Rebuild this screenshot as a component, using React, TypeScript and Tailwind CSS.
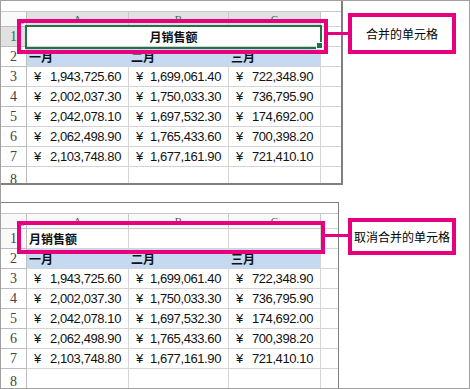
import React from "react";

const data = [
  ["1,943,725.60", "1,699,061.40", "722,348.90"],
  ["2,002,037.30", "1,750,033.30", "736,795.90"],
  ["2,042,078.10", "1,697,532.30", "174,692.00"],
  ["2,062,498.90", "1,765,433.60", "700,398.20"],
  ["2,103,748.80", "1,677,161.90", "721,410.10"],
];

const months = ["一月", "二月", "三月"];

const Sheet = ({ merged }: { merged: boolean }) => {
  const headBg = merged ? "bg-[#e1e1e1]" : "bg-[#f9f9f9]";
  const headText = merged ? "text-[#217346]" : "text-[#555]";

  return (
    <div
      className={`grid grid-cols-[26px_102px_100px_92px_1fr] grid-rows-[11px_15px_repeat(7,20px)_1fr] h-full ${
        merged
          ? "w-[342px] border-r-2 border-b-2 border-[#7f7f7f]"
          : "w-[338px] border-r border-t border-[#808080]"
      }`}
    >
      {/* strip above the headers */}
      <div className="col-span-5 border-b border-[#c8c8c8] bg-white" />

      {/* column headers */}
      <div className="border-r border-b border-[#bdbdbd] bg-[#f9f9f9] flex items-end justify-end p-[2px]">
        <svg width="5" height="5" viewBox="0 0 5 5">
          <path d="M5 0 L5 5 L0 5 Z" fill="#b5b5b5" />
        </svg>
      </div>
      {["A", "B", "C"].map((c) => (
        <div
          key={c}
          className={`border-r border-b border-[#c8c8c8] ${headBg} ${headText} flex items-center justify-center text-[11px] leading-none font-['Liberation_Serif',serif]`}
        >
          {c}
        </div>
      ))}
      <div className="border-b border-[#d4d4d4] bg-white" />

      {/* row 1 */}
      <div
        className={`border-r border-b border-[#bdbdbd] flex items-center justify-center text-[14px] font-['Liberation_Serif',serif] ${
          merged ? "bg-[#e1e1e1] text-[#217346]" : "bg-[#f9f9f9] text-[#444]"
        }`}
      >
        1
      </div>
      {merged ? (
        <div className="col-span-3 border-r border-b border-[#d4d4d4] flex items-center justify-center text-[12px] font-bold text-[#111] font-['Noto_Sans_CJK_SC',sans-serif]">
          月销售额
        </div>
      ) : (
        <>
          <div className="border-r border-b border-[#d4d4d4] flex items-center pl-[2px] text-[12px] font-bold text-[#111] font-['Noto_Sans_CJK_SC',sans-serif]">
            月销售额
          </div>
          <div className="border-r border-b border-[#d4d4d4]" />
          <div className="border-r border-b border-[#d4d4d4]" />
        </>
      )}
      <div className="border-b border-[#d4d4d4]" />

      {/* row 2 */}
      <div className="border-r border-b border-[#bdbdbd] bg-white flex items-center justify-center text-[14px] text-[#444] font-['Liberation_Serif',serif]">
        2
      </div>
      {months.map((m, i) => (
        <div
          key={m}
          className={`border-b border-r border-b-[#d4d4d4] bg-[#c5d9f1] flex items-center pl-[2px] text-[12px] font-bold text-[#111] font-['Noto_Sans_CJK_SC',sans-serif] ${
            i < 2 ? "border-r-[#c5d9f1]" : "border-r-[#d4d4d4]"
          }`}
        >
          {m}
        </div>
      ))}
      <div className="border-b border-[#d4d4d4]" />

      {/* data rows */}
      {data.map((row, r) => (
        <React.Fragment key={r}>
          <div className="border-r border-b border-[#bdbdbd] bg-white flex items-center justify-center text-[14px] text-[#444] font-['Liberation_Serif',serif]">
            {r + 3}
          </div>
          {row.map((v, c) => (
            <div
              key={c}
              className="border-r border-b border-[#d4d4d4] flex items-center justify-between pl-[7px] pr-[7px] text-[13px] tracking-[-0.4px] text-[#111] font-['Liberation_Sans',sans-serif]"
            >
              <span>¥</span>
              <span>{v}</span>
            </div>
          ))}
          <div className="border-b border-[#d4d4d4]" />
        </React.Fragment>
      ))}

      {/* row 8 */}
      <div className="border-r border-[#bdbdbd] bg-white flex items-start justify-center pt-[2px] text-[14px] text-[#444] font-['Liberation_Serif',serif] overflow-hidden">
        8
      </div>
      <div className="border-r border-[#d4d4d4]" />
      <div className="border-r border-[#d4d4d4]" />
      <div className="border-r border-[#d4d4d4]" />
      <div />
    </div>
  );
};

const Callout = ({ text, className }: { text: string; className: string }) => (
  <div
    className={`w-[108px] border-4 border-[#e6007e] flex items-center justify-center text-[12px] text-black font-['Noto_Sans_CJK_SC',sans-serif] ${className}`}
  >
    {text}
  </div>
);

export default function App() {
  return (
    <div className="relative w-[470px] h-[389px] border border-[#a0a0a0] bg-white overflow-hidden">
      <div className="flex flex-col h-full">
        <div className="flex h-[184px]">
          <Sheet merged />
          <div className="flex-1">
            <Callout text="合并的单元格" className="ml-[5px] mt-[12px] h-[41px]" />
          </div>
        </div>

        <div className="h-[17px]" />

        <div className="flex h-[186px]">
          <Sheet merged={false} />
          <div className="flex-1">
            <Callout text="取消合并的单元格" className="ml-[9px] mt-[16px] h-[37px]" />
          </div>
        </div>
      </div>

      {/* selection outline of the merged cell */}
      <div className="absolute left-[24px] top-[24px] w-[297px] h-[24px] border-2 border-[#217346]" />
      <div className="absolute left-[315px] top-[41px] w-[7px] h-[7px] bg-[#217346] border border-white" />

      {/* annotation boxes */}
      <div className="absolute left-[16px] top-[18px] w-[311px] h-[35px] border-4 border-[#e6007e]" />
      <div className="absolute left-[326px] top-[31px] w-[22px] h-[3px] bg-[#e6007e]" />
      <div className="absolute left-[16px] top-[220px] w-[308px] h-[33px] border-4 border-[#e6007e]" />
      <div className="absolute left-[323px] top-[233px] w-[25px] h-[3px] bg-[#e6007e]" />
    </div>
  );
}
